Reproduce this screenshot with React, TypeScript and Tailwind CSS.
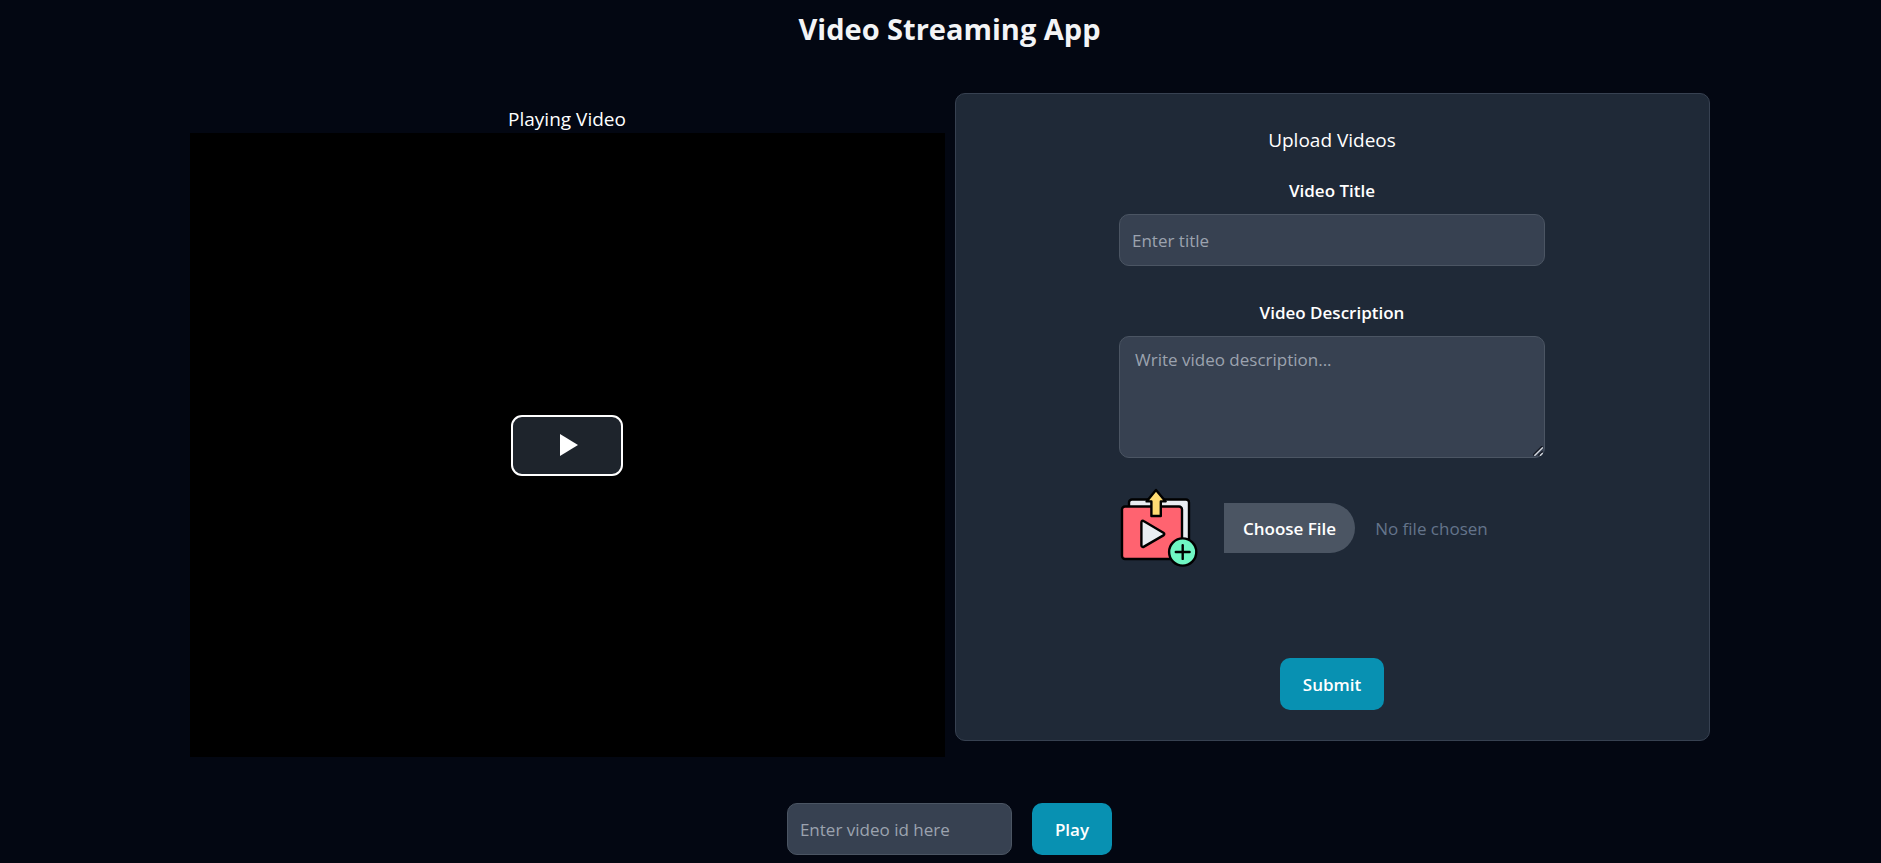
import { useState } from "react";

function UploadIcon() {
  return (
    <svg
      viewBox="0 0 80 80"
      className="size-20 shrink-0"
      stroke="#000"
      strokeWidth="2.4"
      strokeLinejoin="round"
      strokeLinecap="round"
      aria-hidden="true"
    >
      <path d="M10 22V14.5a3 3 0 0 1 3-3h54a3 3 0 0 1 3 3V64H10z" fill="#e9edf2" />
      <rect x="3" y="18.5" width="60" height="52.5" rx="3" fill="#ff6370" />
      <path d="M37 2 46.6 13.4H41.8V28H32.4V13.4H27.6z" fill="#ffdc73" />
      <path
        d="M22.4 34.6c0-1.7 1.2-2.3 2.6-1.4l19.4 11.6c1.2.8 1.2 1.8 0 2.6L25 58.6c-1.4.8-2.6.2-2.6-1.4z"
        fill="#e9edf2"
      />
      <circle cx="63.7" cy="64" r="13.6" fill="#6ff7c3" />
      <path d="M56.8 64h13.8M63.7 57.1v13.8" fill="none" />
    </svg>
  );
}

function ResizeGrip() {
  return (
    <svg
      viewBox="0 0 10 10"
      className="pointer-events-none absolute right-[2px] bottom-[2px] size-[10px]"
      fill="none"
      strokeWidth="1.4"
      aria-hidden="true"
    >
      <path d="M0 9.3 9.3 0M5.4 9.6 9.6 5.4" stroke="#11151f" />
      <path d="M1.4 9.8 9.8 1.4M7 9.8 9.8 7" stroke="#d1d5db" />
    </svg>
  );
}

const field =
  "rounded-[10px] border border-[#4b5563] bg-[#374151] text-[17px] leading-[25px] text-white placeholder:text-[#9ca3af] placeholder:opacity-100";
const action =
  "h-[52px] rounded-[10px] bg-[#0891b2] px-[23px] text-[17px] leading-[25px] font-semibold text-white";

export default function App() {
  const [title, setTitle] = useState("");
  const [description, setDescription] = useState("");
  const [videoId, setVideoId] = useState("");

  return (
    <div className="flex min-h-screen flex-col items-center bg-[#030712] pl-[18px] font-['Open_Sans','Noto_Sans',sans-serif] text-white">
      <h1 className="mt-[9px] text-center text-[29px] leading-10 font-bold text-[#f3f4f6]">
        Video Streaming App
      </h1>

      <main className="mt-11 grid w-full max-w-[1520px] grid-cols-2 items-start gap-[10px]">
        <section className="pt-3 text-center">
          <h2 className="text-[19px] leading-7">Playing Video</h2>
          <div className="flex h-[624px] items-center justify-center bg-black">
            <button
              type="button"
              aria-label="Play Video"
              className="flex h-[61px] w-28 items-center justify-center rounded-[11px] border-2 border-white bg-[#1e242c]"
            >
              <svg viewBox="0 0 24 24" className="ml-1 size-6" fill="#fff" aria-hidden="true">
                <path d="M3 1v22l18-11z" />
              </svg>
            </button>
          </div>
        </section>

        <section className="rounded-[10px] border border-[#374151] bg-[#1f2937] px-6 pt-8 pb-[30px] text-center">
          <h2 className="text-[19px] leading-7">Upload Videos</h2>
          <form
            className="mx-auto mt-6 flex max-w-[426px] flex-col"
            onSubmit={(event) => event.preventDefault()}
          >
            <label htmlFor="title" className="mb-[11px] text-[17px] leading-[25px] font-semibold">
              Video Title
            </label>
            <input
              id="title"
              type="text"
              value={title}
              onChange={(event) => setTitle(event.target.value)}
              placeholder="Enter title"
              className={`${field} h-[52px] px-3`}
            />
            <label
              htmlFor="description"
              className="mt-[34px] mb-[11px] text-[17px] leading-[25px] font-semibold"
            >
              Video Description
            </label>
            <div className="relative flex">
              <textarea
                id="description"
                rows={4}
                value={description}
                onChange={(event) => setDescription(event.target.value)}
                placeholder="Write video description..."
                className={`${field} w-full resize-y px-[15px] py-[10px] [&::-webkit-resizer]:bg-transparent`}
              />
              <ResizeGrip />
            </div>
            <div className="mt-[30px] flex items-center gap-[25px]">
              <UploadIcon />
              <input
                type="file"
                aria-label="Video file"
                className="min-w-0 flex-1 text-[17px] leading-[25px] text-[#64748b] file:mr-5 file:h-[50px] file:rounded-l-none file:rounded-r-full file:border-0 file:bg-[#4b5563] file:px-[19px] file:font-semibold file:text-white"
              />
            </div>
            <button type="submit" className={`${action} mt-[90px] self-center`}>
              Submit
            </button>
          </form>
        </section>
      </main>

      <form
        className="mt-[46px] mb-2 flex items-center gap-5"
        onSubmit={(event) => event.preventDefault()}
      >
        <input
          type="text"
          aria-label="Video id"
          value={videoId}
          onChange={(event) => setVideoId(event.target.value)}
          placeholder="Enter video id here"
          className={`${field} h-[52px] w-[225px] px-3`}
        />
        <button type="submit" className={action}>
          Play
        </button>
      </form>
    </div>
  );
}
